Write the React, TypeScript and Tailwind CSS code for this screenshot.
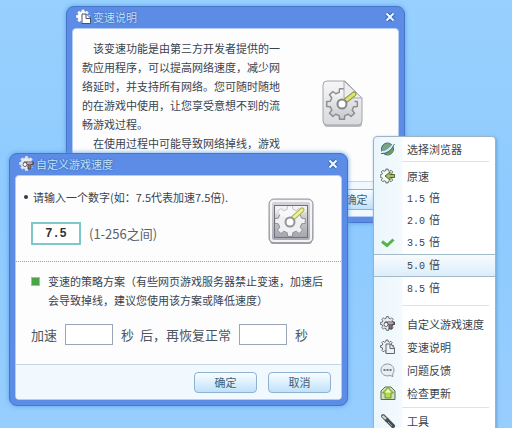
import React from "react";

function gearPath(cx: number, cy: number, inner: number, outer: number, teeth: number) {
  const step = (Math.PI * 2) / teeth;
  const points: string[] = [];
  for (let i = 0; i < teeth; i++) {
    const a = i * step;
    const corners: [number, number][] = [
      [inner, -0.3],
      [outer, -0.2],
      [outer, 0.2],
      [inner, 0.3],
    ];
    corners.forEach(([r, k]) => {
      const x = cx + r * Math.cos(a + k * step);
      const y = cy + r * Math.sin(a + k * step);
      points.push(`${x.toFixed(2)} ${y.toFixed(2)}`);
    });
  }
  return `M${points.join("L")}Z`;
}

function DocumentGear() {
  return (
    <svg width="42" height="48" viewBox="0 0 42 48" aria-hidden="true">
      <defs>
        <linearGradient id="paper" x1="0" y1="0" x2="0" y2="1">
          <stop offset="0" stopColor="#f6f6f7" />
          <stop offset="1" stopColor="#d9dadd" />
        </linearGradient>
        <linearGradient id="cog" x1="0" y1="0" x2="0" y2="1">
          <stop offset="0" stopColor="#fbfbfc" />
          <stop offset="1" stopColor="#c6c7cb" />
        </linearGradient>
      </defs>
      <rect x="2" y="41" width="38" height="6" rx="3" fill="#bdbdc1" />
      <path d="M5 1H23L40 18V41Q40 45 36 45H5Q1 45 1 41V5Q1 1 5 1Z" fill="url(#paper)" stroke="#a3a4a8" />
      <path d={gearPath(20, 24, 12, 15.5, 8)} fill="url(#cog)" stroke="#8d8e93" strokeWidth="1.5" strokeLinejoin="round" />
      <path d="M22 1L40 18H31L22 18Z" fill="#eeeef0" stroke="#a8a9ad" strokeLinejoin="round" />
      <path d="M23 18Q31 15 33 21L27 26Z" fill="#e2e2e5" />
      <path d="M22 22L32 14" stroke="#8b9034" strokeWidth="5" strokeLinecap="round" />
      <path d="M22 22L32 14" stroke="#dfe372" strokeWidth="3" strokeLinecap="round" />
      <circle cx="20" cy="24" r="4.500" fill="#fff" stroke="#85868b" strokeWidth="2" />
    </svg>
  );
}

function FramedGear() {
  return (
    <svg width="46" height="47" viewBox="0 0 46 47" aria-hidden="true">
      <defs>
        <linearGradient id="frame" x1="0" y1="0" x2="0" y2="1">
          <stop offset="0" stopColor="#d6d6dc" />
          <stop offset="1" stopColor="#a9a9b3" />
        </linearGradient>
        <linearGradient id="plate" x1="0" y1="0" x2="0" y2="1">
          <stop offset="0" stopColor="#e6e6ea" />
          <stop offset="1" stopColor="#a4a4ac" />
        </linearGradient>
        <clipPath id="plateClip">
          <rect x="7" y="8" width="32" height="31" />
        </clipPath>
      </defs>
      <rect x="2" y="40" width="42" height="6" rx="3" fill="#a5a5ab" />
      <rect x="1" y="1" width="44" height="44" rx="5" fill="url(#frame)" stroke="#94949e" />
      <rect x="3" y="3" width="40" height="40" rx="3" fill="none" stroke="#f4f4f7" strokeWidth="2" />
      <rect x="6.500" y="7.500" width="33" height="32" fill="url(#plate)" stroke="#72727c" />
      <g clipPath="url(#plateClip)">
        <path d={gearPath(22, 23, 12, 15.5, 8)} fill="#f0f0f3" stroke="#8d8d96" strokeLinejoin="round" />
        <path d="M7 8H39V13L24 22L7 15Z" fill="#fff" opacity="0.5" />
        <path d="M24 21L34 12" stroke="#a9b34a" strokeWidth="5" strokeLinecap="round" />
        <path d="M24 21L34 12" stroke="#edf0a0" strokeWidth="3" strokeLinecap="round" />
        <circle cx="22" cy="24" r="4.500" fill="#fff" stroke="#93939b" strokeWidth="2" />
      </g>
    </svg>
  );
}

function GearPageIcon({ light = false }: { light?: boolean }) {
  const fill = light ? "#fff" : "#eef1f4";
  const line = light ? "#46506a" : "#5e6870";
  return (
    <svg width="16" height="16" viewBox="0 0 16 16" aria-hidden="true">
      <path d={gearPath(7, 7.5, 5, 6.5, 8)} fill={fill} stroke={light ? "#eef5fd" : line} />
      <path d="M6 5H10.500L14.500 9V14.500H6Z" fill={fill} stroke={line} strokeLinejoin="round" />
      <path d="M10 5V9.500H14.500" fill="none" stroke={line} />
    </svg>
  );
}

function GearToolIcon({ light = false }: { light?: boolean }) {
  return (
    <svg width="16" height="16" viewBox="0 0 16 16" aria-hidden="true">
      <path d={gearPath(7.5, 7.5, 5.5, 7, 8)} fill="#e8ebee" stroke={light ? "#cfd9e8" : "#667078"} />
      <path d="M5 6H14.500V8.500H12V13H9V8.500H5Z" fill="#8b6f74" stroke="#4d4a53" strokeLinejoin="round" />
      <circle cx="6" cy="8.500" r="2" fill="#fff" stroke="#5b646c" />
      <path d="M8 7H13" stroke="#e6d6d8" />
    </svg>
  );
}

function GlobeIcon() {
  return (
    <svg width="16" height="16" viewBox="0 0 16 16" aria-hidden="true">
      <circle cx="7.500" cy="8" r="6" fill="#6d9cb3" stroke="#3e6678" />
      <path d="M2 8Q4 2 10 2.500Q9 6 5 7Q3 8 2 10Z" fill="#7fa868" />
      <path d="M6 13Q8 9 13 8Q13 13 8 14Z" fill="#6f9f51" />
      <path d="M2 11Q8 11 13 4" fill="none" stroke="#e2f0e9" strokeWidth="2" />
      <path d="M1 12.500Q9 14 14.500 3" fill="none" stroke="#4e7468" />
    </svg>
  );
}

function RestoreIcon() {
  return (
    <svg width="16" height="16" viewBox="0 0 16 16" aria-hidden="true">
      <path d={gearPath(7, 8, 5.5, 7, 8)} fill="#f6f8f5" stroke="#5d675c" />
      <path d="M5 8L10 4V6.500H14.500V9.500H10V12Z" fill="#a5bf62" stroke="#56672f" strokeLinejoin="round" />
    </svg>
  );
}

function CheckIcon() {
  return (
    <svg width="16" height="16" viewBox="0 0 16 16" aria-hidden="true">
      <path d="M2 6.500L7 10.500L13.500 4.500" fill="none" stroke="#55b44c" strokeWidth="3" />
    </svg>
  );
}

function BubbleIcon() {
  return (
    <svg width="16" height="16" viewBox="0 0 16 16" aria-hidden="true">
      <path d="M7.500 2C11 2 14 4.500 14 8C14 10 13.500 11 12.500 12L13 14.500L10 13.500C5 15 1 12 1 8C1 4.500 4 2 7.500 2Z" fill="#e9eef3" stroke="#8b98a5" />
      <path d="M3.500 8H11.500" stroke="#6f7b88" strokeWidth="2" strokeDasharray="2 1" />
    </svg>
  );
}

function UpdateIcon() {
  return (
    <svg width="16" height="16" viewBox="0 0 16 16" aria-hidden="true">
      <path d="M1 6L5 2H11L15 6V14.500H1Z" fill="#d3dfc4" stroke="#5c7046" strokeLinejoin="round" />
      <path d="M8 2.500L13.500 8H11V13H5V8H2.500Z" fill="#b4dc4b" stroke="#6f9c2c" strokeLinejoin="round" />
      <path d="M8 4L11 7.500H5Z" fill="#f1f9c8" />
    </svg>
  );
}

function ToolsIcon() {
  return (
    <svg width="16" height="16" viewBox="0 0 16 16" aria-hidden="true">
      <path d="M3 3L7 7" stroke="#5a6168" strokeWidth="4" strokeLinecap="round" />
      <path d="M7 7L13 13" stroke="#474d54" strokeWidth="4" strokeLinecap="round" />
      <path d="M2.500 3L6 6" stroke="#d3d9df" strokeWidth="2" />
      <path d="M8 9L12 13" stroke="#9ca3ab" />
    </svg>
  );
}

function CloseButton() {
  return (
    <button type="button" aria-label="关闭" className="flex size-4 items-center justify-center">
      <svg width="10" height="10" viewBox="0 0 10 10" aria-hidden="true">
        <path d="M1.500 1.500L8.500 8.500M8.500 1.500L1.500 8.500" stroke="#3768bd" strokeWidth="4" />
        <path d="M1.500 1.500L8.500 8.500M8.500 1.500L1.500 8.500" stroke="#f2fbff" strokeWidth="2" />
      </svg>
    </button>
  );
}

function DialogButton({ children }: { children: React.ReactNode }) {
  return (
    <button
      type="button"
      className="h-[21px] w-[63px] rounded border border-[#8fb2d0] bg-linear-to-b from-[#fafdff] to-[#bfe1fa] text-[11px] leading-4 text-[#3f5f76]"
    >
      {children}
    </button>
  );
}

type DialogProps = {
  title: string;
  icon: React.ReactNode;
  footer: React.ReactNode;
  className: string;
  children: React.ReactNode;
};

function Dialog({ title, icon, footer, className, children }: DialogProps) {
  return (
    <section
      className={`absolute w-[339px] rounded-lg border border-[#4776c6] bg-[#5c8ce6] px-[5px] pb-[5px] shadow-[0_0_5px_#5c9fe4] ${className}`}
    >
      <header className="flex h-[21px] items-center gap-px pr-px pb-0.5 pl-1">
        {icon}
        <h2 className="flex-1 text-[11px] leading-4 text-[#bfe3fb] [text-shadow:0_0_2px_#244f9c]">{title}</h2>
        <CloseButton />
      </header>
      <div className="overflow-hidden rounded border border-[#b4cdf5] bg-[#fdfdfe]">
        {children}
        <footer className="flex h-[35px] items-center justify-end gap-[11px] border-t border-[#c3d7e4] bg-[#f1f9fe] pr-2.5">
          {footer}
        </footer>
      </div>
    </section>
  );
}

type MenuItemProps = {
  icon?: React.ReactNode;
  className?: string;
  children: React.ReactNode;
};

function MenuItem({ icon, className = "h-[23px]", children }: MenuItemProps) {
  return (
    <button type="button" role="menuitem" className={`flex w-full items-center text-left ${className}`}>
      <span className="flex w-7 justify-center">{icon}</span>
      <span className="flex items-baseline gap-1 pl-[5px]">{children}</span>
    </button>
  );
}

const Speed = ({ value }: { value: string }) => (
  <>
    <span className="font-['Liberation_Mono',monospace] text-[10px]">{value}</span>
    <span>倍</span>
  </>
);

const Separator = () => <hr className="mr-1.5 ml-7 border-[#dde3e7]" />;

export default function App() {
  return (
    <main className="relative h-screen w-full overflow-hidden bg-linear-to-b from-[#98d1ff] via-[#8ecafe] to-[#96cefe] font-['Noto_Sans_CJK_SC',sans-serif] text-[11px] text-[#39434e]">
      <Dialog
        title="变速说明"
        icon={<GearPageIcon light />}
        footer={<DialogButton>确定</DialogButton>}
        className="top-1.5 left-[66px]"
      >
        <div className="flex h-[152px] items-start justify-between pt-2.5 pr-[34px] pl-[9px]">
          <div className="w-[200px] leading-[19px]">
            <p className="indent-[1em]">
              该变速功能是由第三方开发者提供的一款应用程序，可以提高网络速度，减少网络延时，并支持所有网络。您可随时随地的在游戏中使用，让您享受意想不到的流畅游戏过程。
            </p>
            <p className="indent-[1em]">在使用过程中可能导致网络掉线，游戏</p>
          </div>
          <div className="pt-[41px]">
            <DocumentGear />
          </div>
        </div>
      </Dialog>

      <Dialog
        title="自定义游戏速度"
        icon={<GearToolIcon light />}
        footer={
          <>
            <DialogButton>确定</DialogButton>
            <DialogButton>取消</DialogButton>
          </>
        }
        className="top-[153px] left-[9px]"
      >
        <div className="flex h-[86px] items-start justify-between border-b border-dotted border-[#9a9fa5] pr-[27px] pl-2">
          <div className="pt-3">
            <label htmlFor="speed" className="flex items-center gap-[5px] leading-[18px]">
              <span className="size-1 rounded-full bg-[#2f3c4a]" />
              请输入一个数字(如：7.5代表加速7.5倍).
            </label>
            <div className="flex items-center gap-2 pt-4 pl-[7px]">
              <input
                id="speed"
                type="text"
                defaultValue="7.5"
                className="h-[23px] w-[50px] border-2 border-[#7cc8ca] bg-white text-center font-['Liberation_Mono',monospace] text-[12px] font-bold text-[#2c3136] outline-none"
              />
              <span className="text-[13px] leading-5 text-[#5a626a]">(1-256之间)</span>
            </div>
          </div>
          <div className="pt-[22px]">
            <FramedGear />
          </div>
        </div>
        <div className="h-[102px] pt-2.5 pr-3 pl-[15px]">
          <div className="flex items-start gap-2 leading-[19px]">
            <input
              id="strategy"
              type="checkbox"
              defaultChecked
              className="mt-[5px] size-[9px] shrink-0 appearance-none border border-[#8fd27d] bg-[#4ba545]"
            />
            <label htmlFor="strategy">
              变速的策略方案（有些网页游戏服务器禁止变速，加速后
              <br />
              会导致掉线，建议您使用该方案或降低速度）
            </label>
          </div>
          <div className="flex items-center gap-2 pt-3.5 text-[13px] leading-5 text-[#4c565f]">
            <label htmlFor="boost">加速</label>
            <input id="boost" type="text" className="h-[21px] w-12 border border-[#9aa6b4] bg-white outline-none" />
            <span className="flex gap-1.5">
              <span>秒</span>
              <label htmlFor="restore">后，再恢复正常</label>
            </span>
            <input id="restore" type="text" className="h-[21px] w-12 border border-[#9aa6b4] bg-white outline-none" />
            <span>秒</span>
          </div>
        </div>
      </Dialog>

      <div
        role="menu"
        className="absolute top-[136px] left-[373px] w-[123px] rounded border border-[#9db3c1] bg-linear-to-r from-[#eaf6fc] from-0% via-[#f4fafd] via-23% to-white to-24% pb-3 leading-5 shadow-[1px_1px_3px_#6ea5d3]"
      >
        <MenuItem icon={<GlobeIcon />} className="h-6">选择浏览器</MenuItem>
        <Separator />
        <div className="pt-[3px] pb-1.5">
          <MenuItem icon={<RestoreIcon />} className="h-[22px]">原速</MenuItem>
          <MenuItem className="h-[22px]"><Speed value="1.5" /></MenuItem>
          <MenuItem className="h-[22px]"><Speed value="2.0" /></MenuItem>
          <MenuItem icon={<CheckIcon />} className="h-[23px]"><Speed value="3.5" /></MenuItem>
          <MenuItem className="h-[23px] border-y border-[#a5bac8] bg-linear-to-b from-[#f7fbfe] to-[#dceefa]">
            <Speed value="5.0" />
          </MenuItem>
          <MenuItem className="h-[22px]"><Speed value="8.5" /></MenuItem>
        </div>
        <Separator />
        <div className="pt-1.5 pb-[3px]">
          <MenuItem icon={<GearToolIcon />}>自定义游戏速度</MenuItem>
          <MenuItem icon={<GearPageIcon />}>变速说明</MenuItem>
          <MenuItem icon={<BubbleIcon />}>问题反馈</MenuItem>
          <MenuItem icon={<UpdateIcon />}>检查更新</MenuItem>
        </div>
        <Separator />
        <div className="pt-[3px]">
          <MenuItem icon={<ToolsIcon />} className="h-5 leading-none">工具</MenuItem>
        </div>
      </div>
    </main>
  );
}
